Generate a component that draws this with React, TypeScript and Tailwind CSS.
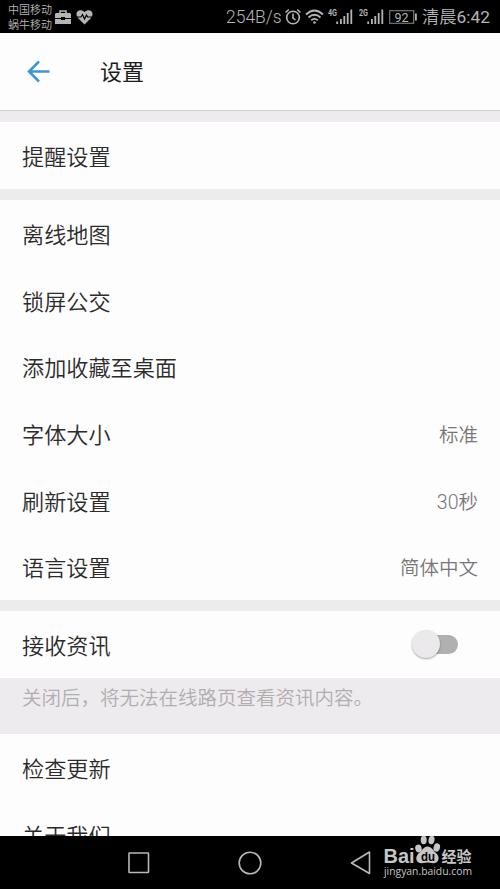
import React from "react";

function Signal({ label }: { label: string }) {
  return (
    <svg width="28" height="22" viewBox="0 0 28 22" className="shrink-0" fill="#b5b5b5">
      <text x="0" y="10" fontSize="8.5" fontWeight="700" fontFamily="Roboto, sans-serif" textLength="9" lengthAdjust="spacingAndGlyphs">
        {label}
      </text>
      <rect x="8.3" y="15.5" width="1.8" height="2.5" />
      <rect x="12" y="13" width="1.8" height="5" />
      <rect x="15.4" y="10" width="1.8" height="8" />
      <rect x="18.8" y="7" width="1.8" height="11" />
      <rect x="22.4" y="3.5" width="1.8" height="14.5" />
    </svg>
  );
}

function StatusBar() {
  return (
    <header className="flex h-[33px] shrink-0 items-center bg-black pl-2 text-[#b5b5b5]">
      <div className="w-[44px] shrink-0 whitespace-nowrap pt-[2px] text-[11px] leading-[15px]">
        <div>中国移动</div>
        <div>蜗牛移动</div>
      </div>
      <svg width="18" height="16" viewBox="0 0 18 16" className="ml-[3px] shrink-0">
        <path d="M5 4V2h6v2" fill="none" stroke="#b5b5b5" strokeWidth="1.600" />
        <path d="M1 4h14l1 1v4h-6V8H6v1H0V5z M0 10h6v1h4v-1h6v5H0z" fill="#b5b5b5" />
      </svg>
      <svg width="17" height="16" viewBox="0 0 17 16" className="ml-[3px] shrink-0">
        <path d="M8.500 15.500L2 9C-2.500 3 4-1.500 8.500 3 13-1.500 19.500 3 15 9z" fill="#b5b5b5" />
        <path d="M0 8h5l1.500-2.500L8.500 10l2-4 1 2H17" fill="none" stroke="#000" strokeWidth="1.200" />
      </svg>
      <span className="ml-[133px] w-[54px] shrink-0 whitespace-nowrap text-[17.500px] font-light leading-6">254B/s</span>
      <svg width="18" height="18" viewBox="0 0 18 18" className="ml-1 shrink-0" fill="none" stroke="#b5b5b5" strokeWidth="1.600">
        <circle cx="9" cy="9.500" r="6.300" />
        <path d="M9 5.500v4.500l2.500 2M1.500 4.500L4.800 1.500M16.500 4.500L13.200 1.500" />
      </svg>
      <svg width="19" height="18" viewBox="0 0 19 18" className="ml-[3px] shrink-0" fill="none" stroke="#b5b5b5" strokeWidth="1.800">
        <path d="M1 6.500Q9.500-1.500 18 6.500M3.500 9.500Q9.500 4 15.500 9.500M6.200 12.300Q9.500 9.500 12.800 12.300" />
        <circle cx="9.500" cy="14.500" r="1.300" fill="#b5b5b5" stroke="none" />
      </svg>
      <div className="ml-[4px] flex items-center gap-[3px] pt-[1px]">
        <Signal label="4G" />
        <Signal label="2G" />
      </div>
      <svg width="29" height="16" viewBox="0 0 29 16" className="ml-[2px] shrink-0" fill="#b5b5b5">
        <rect x="0.700" y="1.700" width="24" height="12.600" fill="none" stroke="#777" strokeWidth="1.200" />
        <rect x="26" y="4.500" width="1.800" height="7" />
        <text x="5.500" y="12.500" fontSize="12.500" fontWeight="400" fontFamily="Roboto, sans-serif">92</text>
      </svg>
      <span className="ml-[4px] whitespace-nowrap text-[17.300px] font-[350] leading-6">清晨<span className="font-normal">6:42</span></span>
    </header>
  );
}

function Row({ label, value, children }: { label: string; value?: string; children?: React.ReactNode }) {
  return (
    <div className="flex h-[66.700px] shrink-0 items-center justify-between pl-[22px] pr-[22px] pt-[3px]">
      <span className="text-[22.150px] leading-[30px] text-[#2b2b2b]">{label}</span>
      {value && <span className="pt-[2px] text-[19.500px] leading-7 text-[#777]">{value}</span>}
      {children}
    </div>
  );
}

function Toggle() {
  return (
    <div className="-mt-[3px] mr-[20px] flex items-center">
      <div className="z-10 size-[28px] shrink-0 rounded-full bg-[#ebe9eb] shadow-[0_1px_2px_rgba(0,0,0,0.35)]" />
      <div className="-ml-[16px] h-[19px] w-[34px] rounded-full bg-[#b1b0b1]" />
    </div>
  );
}

function Watermark() {
  return (
    <svg width="96" height="56" viewBox="0 0 96 56" className="absolute left-[381px] top-[833px]" fill="#c6c6c6">
      <text x="2.500" y="29.500" fontSize="20.500" fontWeight="700" fontFamily="Liberation Sans, sans-serif" textLength="31" lengthAdjust="spacingAndGlyphs">Bai</text>
      <ellipse cx="37.500" cy="15.500" rx="3.200" ry="4" transform="rotate(-15 37.500 15.500)" />
      <ellipse cx="42.700" cy="7" rx="3" ry="4.200" />
      <ellipse cx="50.500" cy="7" rx="3" ry="4.200" transform="rotate(10 50.500 7)" />
      <ellipse cx="55.800" cy="14.500" rx="3.200" ry="4.200" transform="rotate(15 55.800 14.500)" />
      <path d="M46.500 13.500c4 0 5.500 4 8.500 6.500 5.500 5 1.500 11.500-4 10-3-.8-6-.8-9 0-6 1.500-9.500-5-4-10 3.500-2.500 4.500-6.500 8.500-6.500z" />
      <text x="40" y="27.500" fontSize="12" fontWeight="700" fill="#000" fontFamily="Liberation Sans, sans-serif" textLength="14" lengthAdjust="spacingAndGlyphs">du</text>
      <text x="60.500" y="29" fontSize="15" fontWeight="700" fontFamily="Noto Sans CJK SC, sans-serif" textLength="30" lengthAdjust="spacingAndGlyphs">经验</text>
      <text x="3" y="42" fontSize="10.500" fontWeight="500" fontFamily="Open Sans, sans-serif" textLength="88" lengthAdjust="spacingAndGlyphs">jingyan.baidu.com</text>
    </svg>
  );
}

export default function App() {
  return (
    <div className="relative flex h-[889px] w-[500px] flex-col overflow-hidden bg-[#eeebee] font-['Roboto','Noto_Sans_CJK_SC',sans-serif] font-[350]">
      <StatusBar />
      <div className="flex h-[78px] shrink-0 items-center border-b border-[#cfcdcf] bg-[#fdfdfd] pl-[27px]">
        <svg width="24" height="24" viewBox="0 0 24 24" fill="none" stroke="#3c96cf" strokeWidth="2.500">
          <path d="M12 1.500L2 11.500l10 10M2 11.500H22.500" />
        </svg>
        <h1 className="ml-[49px] pt-[3px] text-[22px] font-normal leading-[30px] text-[#1c1c1c]">设置</h1>
      </div>
      <section className="mt-[11px] h-[67px] shrink-0 bg-[#fdfdfd]">
        <Row label="提醒设置" />
      </section>
      <section className="mt-[11px] h-[400px] shrink-0 bg-[#fdfdfd]">
        <Row label="离线地图" />
        <Row label="锁屏公交" />
        <Row label="添加收藏至桌面" />
        <Row label="字体大小" value="标准" />
        <Row label="刷新设置" value="30秒" />
        <Row label="语言设置" value="简体中文" />
      </section>
      <section className="mt-[11px] h-[67px] shrink-0 bg-[#fdfdfd]">
        <Row label="接收资讯">
          <Toggle />
        </Row>
      </section>
      <p className="h-[56px] shrink-0 whitespace-nowrap pl-[22px] pt-[7px] text-[19.500px] leading-7 text-[#b0aeb0]">
        关闭后，将无法在线路页查看资讯内容。
      </p>
      <section className="h-[102px] shrink-0 overflow-hidden bg-[#fdfdfd]">
        <Row label="检查更新" />
        <Row label="关于我们" />
      </section>
      <nav className="flex h-[53px] shrink-0 items-center bg-black pl-[128px]">
        <svg width="22" height="24" viewBox="0 0 22 24" fill="none" stroke="#b8b8b8" strokeWidth="1.600">
          <rect x="1" y="2" width="19.500" height="19.500" rx="0.500" />
        </svg>
        <svg width="24" height="24" viewBox="0 0 24 24" className="ml-[88px]" fill="none" stroke="#b8b8b8" strokeWidth="1.600">
          <circle cx="12" cy="12" r="10.800" />
        </svg>
        <svg width="22" height="26" viewBox="0 0 22 26" className="ml-[88px]" fill="none" stroke="#b8b8b8" strokeWidth="1.600">
          <path d="M19.500 2L1.500 13l18 10.500z" strokeLinejoin="round" />
        </svg>
      </nav>
      <Watermark />
    </div>
  );
}
